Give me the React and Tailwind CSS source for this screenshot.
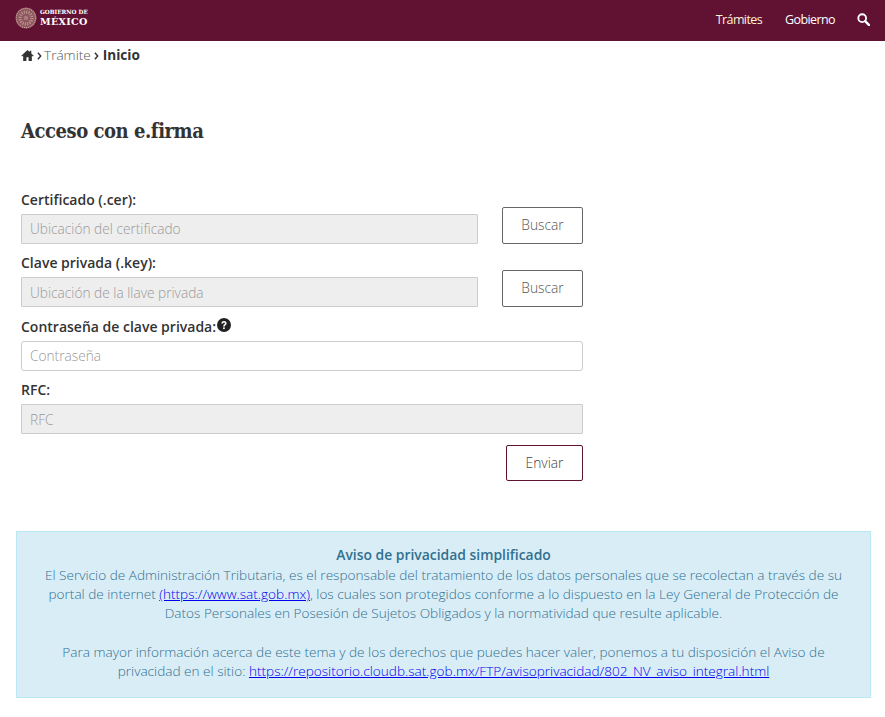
const sans = { fontFamily: '"Open Sans", sans-serif' }
const serif = { fontFamily: '"DejaVu Serif Condensed", "DejaVu Serif", serif', fontStretch: 'condensed' }

function Field({ label, placeholder, disabled, help, wide }) {
  return (
    <div>
      <label className="flex items-center h-[20px] text-[14px] leading-[20px] font-semibold text-[#333]">
        {label}
        {help && (
          <svg viewBox="0 0 24 24" className="w-[14px] h-[14px] ml-[1px] -mt-[4px]">
            <circle cx="12" cy="12" r="12" fill="#222" />
            <path d="M7.5 9.5a4.5 4.5 0 0 1 9 0c0 2.8-3.2 2.8-3.2 5h-2.8c0-3.6 3.1-3.4 3.1-5a1.6 1.6 0 0 0-3.2 0z" fill="#fff" />
            <rect x="10.5" y="16" width="2.8" height="3" fill="#fff" />
          </svg>
        )}
      </label>
      <input
        disabled={disabled}
        placeholder={placeholder}
        className={`block mt-[4px] h-[30px] px-[8px] text-[13.7px] font-light border border-[#ccc] placeholder:text-[#999] ${wide ? 'w-full' : 'w-[457px]'} ${disabled ? 'bg-[#eee] rounded-[1px]' : 'bg-white rounded-[3px]'}`}
      />
    </div>
  )
}

function BrowseRow({ label, placeholder }) {
  return (
    <div className="flex items-start justify-between">
      <Field label={label} placeholder={placeholder} disabled />
      <button className="mt-[17px] w-[81px] h-[37px] bg-white border border-[#666] rounded-[2px] text-[13.8px] font-light text-[#555]">
        Buscar
      </button>
    </div>
  )
}

function Chevron({ extra }) {
  return (
    <svg viewBox="0 0 6 10" className={`w-[5px] h-[8px] mt-[1px] ml-[3px] ${extra}`}>
      <path d="M1 1l3.5 4L1 9" fill="none" stroke="#333" strokeWidth="1.8" />
    </svg>
  )
}

export default function App() {
  return (
    <div style={sans} className="min-h-[717px] bg-white text-[#333]">
      <nav className="h-[41px] bg-[#611232] flex items-center justify-between px-[15px]">
        <div className="flex items-center gap-[3px] -mt-[4px]">
          <svg viewBox="0 0 24 24" className="w-[22px] h-[22px] -mt-[1px]">
            <circle cx="12" cy="12" r="11.5" fill="#8c5560" />
            <circle cx="12" cy="12" r="10.5" fill="none" stroke="#c9a89a" strokeWidth="1.2" strokeDasharray="1.2 1" />
            <circle cx="12" cy="12" r="6.5" fill="none" stroke="#b98f88" strokeWidth="3.5" strokeDasharray="1.3 1.2" />
            <circle cx="12" cy="12" r="2.5" fill="#a87a7c" />
          </svg>
          <div className="text-white font-bold leading-none" style={{ fontFamily: '"DejaVu Serif", serif' }}>
            <div className="text-[5.7px]">GOBIERNO DE</div>
            <div className="text-[9.6px] tracking-[0.03em] mt-[1px]">MÉXICO</div>
          </div>
        </div>
        <div className="flex items-center text-[12.5px] font-normal tracking-[-0.6px]">
          <a className="text-[#fff3d6]">Trámites</a>
          <a className="ml-[23px] text-white">Gobierno</a>
          <svg viewBox="0 0 14 14" className="ml-[22px] w-[13px] h-[13px] -mt-[3px]">
            <circle cx="5.6" cy="5.6" r="4.2" fill="none" stroke="#fff" strokeWidth="2" />
            <path d="M8.8 8.8 13 13" stroke="#fff" strokeWidth="2.6" strokeLinecap="round" />
          </svg>
        </div>
      </nav>

      <div className="flex items-center h-[29px] pl-[21px] text-[13.6px]">
        <svg viewBox="0 0 24 24" className="w-[13px] h-[13px] fill-[#333]">
          <path d="M12 2 0.5 12.5l1.5 1.5L4 12.2V22h6v-7h4v7h6V12.2l2 1.8 1.5-1.5-4.5-4V3h-3v2.6z" />
        </svg>
        <Chevron extra="mr-[2px]" />
        <span className="font-light text-[#555]">Trámite</span>
        <Chevron extra="mr-[4px]" />
        <span className="font-bold">Inicio</span>
      </div>

      <h1 className="mt-[46px] ml-[21px] text-[20px] leading-[30px] font-bold text-[#333] tracking-[-0.45px]" style={serif}>
        Acceso con e.firma
      </h1>

      <form className="mt-[43.6px] ml-[21px] w-[562px] flex flex-col gap-[9.5px]">
        <BrowseRow label="Certificado (.cer):" placeholder="Ubicación del certificado" />
        <BrowseRow label="Clave privada (.key):" placeholder="Ubicación de la llave privada" />
        <Field label="Contraseña de clave privada:" placeholder="Contraseña" help wide />
        <Field label="RFC:" placeholder="RFC" disabled wide />
        <div className="flex justify-end mt-[1.5px]">
          <button className="w-[77px] h-[36px] bg-white border border-[#611232] rounded-[2px] text-[13.8px] font-light text-[#444]">
            Enviar
          </button>
        </div>
      </form>

      <div className="mt-[50px] ml-[16px] mr-[14px] h-[167px] px-[15px] pt-[14px] bg-[#d9edf7] border border-[#bce8f1] text-[#31708f] text-center text-[13.6px] leading-[19.2px] font-light">
        <p className="font-semibold text-[13.9px] leading-[18.6px]">Aviso de privacidad simplificado</p>
        <p>
          El Servicio de Administración Tributaria, es el responsable del tratamiento de los datos personales que se recolectan a través de su portal de internet{' '}
          <a className="text-[#0000ee] underline">(https://www.sat.gob.mx)</a>, los cuales son protegidos conforme a lo dispuesto en la Ley General de Protección de Datos Personales en Posesión de Sujetos Obligados y la normatividad que resulte aplicable.
        </p>
        <br />
        <p>
          Para mayor información acerca de este tema y de los derechos que puedes hacer valer, ponemos a tu disposición el Aviso de privacidad en el sitio:{' '}
          <a className="text-[#0000ee] underline">https://repositorio.cloudb.sat.gob.mx/FTP/avisoprivacidad/802_NV_aviso_integral.html</a>
        </p>
      </div>
    </div>
  )
}
